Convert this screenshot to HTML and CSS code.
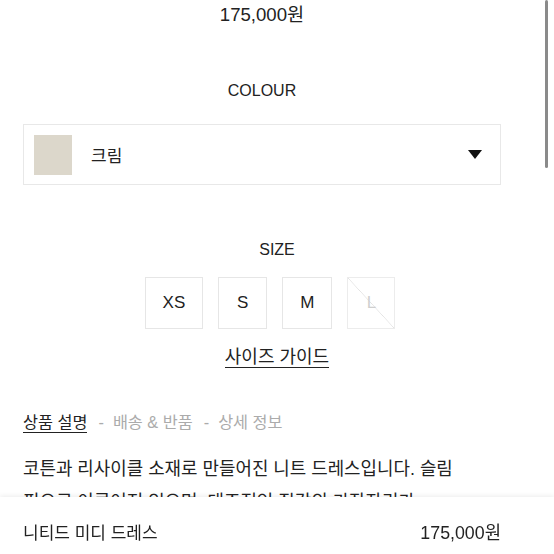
FILE: index.html
```html
<!DOCTYPE html>
<html lang="ko">
<head>
<meta charset="utf-8">
<link rel="stylesheet" href="styles.css">
</head>
<body>
<div class="main">
  <div class="price">175,000원</div>
  <div class="label colour-label">COLOUR</div>
  <div class="select">
    <span class="swatch"></span>
    <span class="select-text">크림</span>
    <svg class="caret" width="14" height="9" viewBox="0 0 14 9"><path d="M0 0 L14 0 L7 9 Z" fill="#111"/></svg>
  </div>
</div>
<div class="size-section">
  <div class="label size-label">SIZE</div>
  <div class="sizes">
    <span class="size">XS</span>
    <span class="size">S</span>
    <span class="size">M</span>
    <span class="size disabled">L</span>
  </div>
  <a class="guide">사이즈 가이드</a>
</div>
<div class="main">
  <div class="tabs">
    <span class="tab active">상품 설명</span><span class="sep">-</span><span class="tab">배송 &amp; 반품</span><span class="sep">-</span><span class="tab">상세 정보</span>
  </div>
  <p class="desc">코튼과 리사이클 소재로 만들어진 니트 드레스입니다. 슬림 핏으로 이루어져 있으며, 대조적인 질감의 가장자리가 특징입니다.</p>
</div>
<div class="bottom-bar">
  <span class="bottom-name">니티드 미디 드레스</span>
  <span class="bottom-price">175,000원</span>
</div>
<div class="scroll-thumb"></div>
</body>
</html>
```
FILE: styles.css
```css
html, body {
  margin: 0;
  padding: 0;
}
body {
  width: 554px;
  height: 554px;
  overflow: hidden;
  background: #fff;
  color: #222;
  font-family: "Liberation Sans", "Noto Sans CJK KR", sans-serif;
}
.main {
  padding: 0 53px 0 23px;
}
.price {
  text-align: center;
  font-size: 18.6px;
  line-height: 22px;
  padding-top: 4px;
}
.label {
  text-align: center;
  font-size: 16px;
  line-height: 20px;
}
.colour-label {
  margin-top: 55px;
}
.select {
  margin-top: 23px;
  height: 61px;
  box-sizing: border-box;
  border: 1px solid #e8e8e8;
  display: flex;
  align-items: center;
  padding: 0 18px 0 10px;
}
.swatch {
  width: 38px;
  height: 40px;
  background: #dcd7cb;
}
.select-text {
  margin-left: 19px;
  font-size: 17px;
  flex: 1;
}
.size-section {
  text-align: center;
}
.size-label {
  margin-top: 55px;
}
.sizes {
  margin-top: 17px;
  display: flex;
  justify-content: center;
  gap: 15px;
  padding-right: 14px;
}
.size {
  box-sizing: border-box;
  height: 52px;
  min-width: 49px;
  padding: 0 17px;
  border: 1px solid #e6e6e6;
  display: flex;
  align-items: center;
  justify-content: center;
  font-size: 17px;
}
.size.disabled {
  min-width: 48px;
  color: #cfcfcf;
  font-size: 17px;
  border-color: #ececec;
  background: linear-gradient(to top right, transparent calc(50% - 0.6px), #e3e3e3 50%, transparent calc(50% + 0.6px));
}
.guide {
  display: inline-block;
  margin-top: 18px;
  font-size: 18px;
  line-height: 20px;
  border-bottom: 1.5px solid #222;
  color: #222;
}
.tabs {
  margin-top: 44px;
  font-size: 16.3px;
  line-height: 20px;
  color: #ababab;
}
.tab.active {
  color: #222;
  display: inline-block;
  border-bottom: 1.5px solid #222;
  line-height: 19px;
}
.sep {
  margin: 0 9px 0 11px;
}
.desc {
  margin: 20px 0 0;
  font-size: 17.9px;
  line-height: 33px;
  max-height: 66px;
  overflow: hidden;
  word-break: keep-all;
}
.bottom-bar {
  position: fixed;
  left: 0;
  right: 0;
  bottom: 0;
  height: 57px;
  box-sizing: border-box;
  padding: 11px 53px 0 23px;
  background: #fff;
  box-shadow: 0 -1px 5px rgba(0, 0, 0, 0.08);
  display: flex;
  align-items: center;
  justify-content: space-between;
  font-size: 17px;
}
.bottom-price {
  font-size: 17.8px;
}
.scroll-thumb {
  position: fixed;
  top: 0;
  right: 6px;
  width: 3px;
  height: 168px;
  border-radius: 2px;
  background: #8a8a8a;
}
```
